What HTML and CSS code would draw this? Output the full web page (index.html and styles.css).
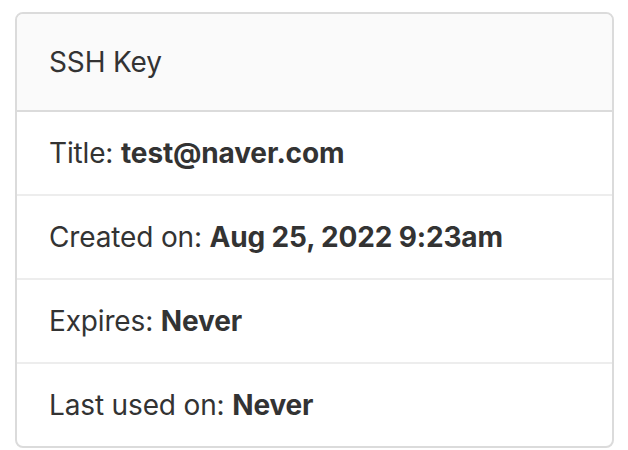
FILE: index.html
```html
<!DOCTYPE html>
<html>
<head>
<meta charset="utf-8">
<link rel="stylesheet" href="styles.css">
</head>
<body>
<div class="card">
  <div class="card-header">SSH Key</div>
  <ul class="list">
    <li class="item">Title: <strong>test@naver.com</strong></li>
    <li class="item">Created on: <strong>Aug 25, 2022 9:23am</strong></li>
    <li class="item">Expires: <strong>Never</strong></li>
    <li class="item">Last used on: <strong>Never</strong></li>
  </ul>
</div>
</body>
</html>
```
FILE: styles.css
```css
html, body {
  margin: 0;
  padding: 0;
  background: #ffffff;
}
body {
  padding: 12px 14px 0 15px;
  font-family: Inter, "Liberation Sans", Arial, sans-serif;
  font-size: 28px;
  letter-spacing: -0.15px;
  color: #333333;
}
.card {
  border: 2px solid #dbdbdb;
  border-radius: 8px;
  overflow: hidden;
}
.card-header {
  background: #fafafa;
  padding: 28px 32px;
  line-height: 40px;
  border-bottom: 2px solid #dbdbdb;
}
.list {
  list-style: none;
  margin: 0;
  padding: 0;
}
.item {
  padding: 21px 32px;
  line-height: 40px;
  border-bottom: 2px solid #ededed;
}
.item:last-child {
  border-bottom: none;
}
.item strong {
  font-weight: 700;
}
```
